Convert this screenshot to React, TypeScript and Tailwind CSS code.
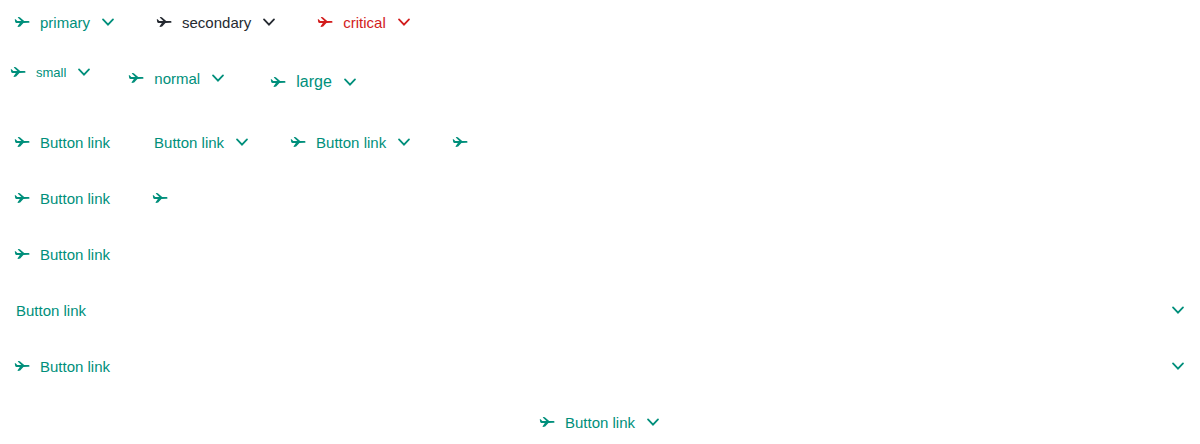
import React from "react";

type Size = "small" | "normal" | "large";
type Tone = "primary" | "secondary" | "critical";

const sizes: Record<Size, string> = {
  small: "h-8 px-2 text-[13px]",
  normal: "h-11 px-3 text-[15px]",
  large: "h-[52px] px-4 text-base",
};
const tones: Record<Tone, string> = {
  primary: "text-[#008f7b]",
  secondary: "text-[#252a31]",
  critical: "text-[#d21c1c]",
};

const Airplane = () => (
  <svg viewBox="0 0 24 24" fill="currentColor" className="size-5 shrink-0">
    <path d="M3.3 8.8l1.1-.2 1.9 2.1h4.9L6.9 6.7l.7-.6 1.8.1 5.2 4.5 5.3.1c.7 0 1.1.5 1.1 1.1s-.5 1.1-1.4 1.1l-5.9.3-3.9 4.2-2.6.6-.6-.7 2.8-4.1H6.3c-1.4 0-2.4-.7-2.6-2z" />
  </svg>
);
const Chevron = () => (
  <svg viewBox="0 0 24 24" fill="none" stroke="currentColor" strokeWidth="2.15" strokeLinecap="round" strokeLinejoin="miter" className="size-5 shrink-0">
    <path d="m6 8.8 6 6.3 6-6.3" />
  </svg>
);

interface Props {
  children?: React.ReactNode;
  size?: Size;
  tone?: Tone;
  left?: boolean;
  right?: boolean;
  className?: string;
}

function ButtonLink({ children, size = "normal", tone = "primary", left = true, right = false, className = "" }: Props) {
  return (
    <button className={`flex shrink-0 items-center gap-2 leading-none ${sizes[size]} ${tones[tone]} ${className}`}>
      {left && <Airplane />}
      {children && <span className={`${left ? "" : "pl-1"} ${right ? "" : "pr-1"}`}>{children}</span>}
      {right && <Chevron />}
    </button>
  );
}

export default function App() {
  return (
    <main className="flex w-full flex-col gap-3 bg-white font-[Liberation_Sans,sans-serif]">
      <div className="flex gap-3">
        <ButtonLink right>primary</ButtonLink>
        <ButtonLink tone="secondary" right>secondary</ButtonLink>
        <ButtonLink tone="critical" right>critical</ButtonLink>
      </div>
      <div className="flex gap-3">
        <ButtonLink size="small" right>small</ButtonLink>
        <ButtonLink right>normal</ButtonLink>
        <ButtonLink size="large" right>large</ButtonLink>
      </div>
      <div className="flex gap-3">
        <ButtonLink>Button link</ButtonLink>
        <ButtonLink left={false} right>Button link</ButtonLink>
        <ButtonLink right>Button link</ButtonLink>
        <ButtonLink />
      </div>
      <div className="flex gap-3">
        <ButtonLink>Button link</ButtonLink>
        <ButtonLink />
      </div>
      <ButtonLink>Button link</ButtonLink>
      <ButtonLink left={false} right className="justify-between">Button link</ButtonLink>
      <ButtonLink right className="[&>svg:last-child]:ml-auto">Button link</ButtonLink>
      <ButtonLink right className="justify-center">Button link</ButtonLink>
    </main>
  );
}
